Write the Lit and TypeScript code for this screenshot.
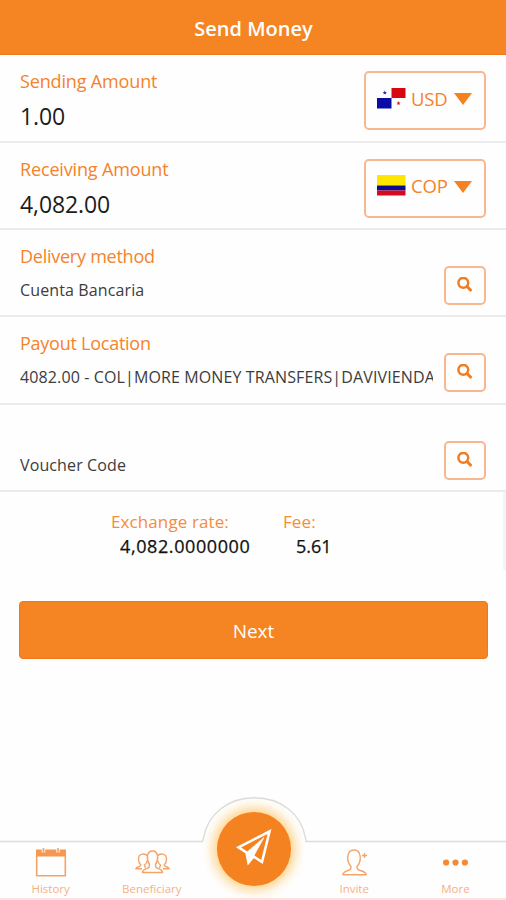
import { LitElement, html, css, svg } from "lit";
import { customElement, property } from "lit/decorators.js";

const panama = svg`<svg viewBox="0 0 29 21" width="29" height="21">
  <rect x="14.5" y="0" width="14" height="10" fill="#d80610"/>
  <rect x="0" y="10" width="14.5" height="10.5" fill="#0b0ba6"/>
  <path d="M7.8 2.6l.6 1.4 1.5.1-1.1 1 .3 1.5-1.3-.8-1.3.8.3-1.5-1.1-1 1.5-.1z" fill="#2a2ab0"/>
  <path d="M21.5 13.1l.6 1.4 1.5.1-1.1 1 .3 1.5-1.3-.8-1.3.8.3-1.5-1.1-1 1.5-.1z" fill="#d8201c"/>
</svg>`;

const colombia = svg`<svg viewBox="0 0 29 21" width="29" height="21">
  <rect width="28.5" height="10.5" fill="#ffe600"/>
  <rect y="10.5" width="28.5" height="5" fill="#0b0b96"/>
  <rect y="15.5" width="28.5" height="5" fill="#d50a1c"/>
</svg>`;

@customElement("amount-row")
class AmountRow extends LitElement {
  @property() label = "";
  @property() value = "";
  @property() currency = "";
  static styles = css`
    :host { display: flex; justify-content: space-between; box-sizing: border-box; height: 100%; padding: 0 20px; }
    .label { font-size: 18px; line-height: 24px; color: #f4832b; margin-top: 14px; letter-spacing: -0.15px; }
    .value { font-size: 23px; line-height: 30px; color: #1c1c1c; margin-top: 8px; letter-spacing: -0.1px; }
    .pick { display: flex; align-items: center; box-sizing: border-box; width: 122px; height: 59px; margin-top: 16px;
      border: 2px solid #f8b78f; border-radius: 5px; padding: 0 0 5px 11px; color: #f4832b; font-size: 18.5px; }
    .flag { display: flex; margin-right: 5px; }
    .code { width: 38px; letter-spacing: -0.2px; white-space: nowrap; }
    .caret { width: 0; height: 0; margin: 2px 0 0 4.5px; border: 9.5px solid transparent; border-top: 12px solid #f58220; border-bottom: 0; }
  `;
  render() {
    return html`<div><div class="label">${this.label}</div><div class="value">${this.value}</div></div>
      <div class="pick"><span class="flag">${this.currency === "USD" ? panama : colombia}</span>
      <span class="code">${this.currency}</span><span class="caret"></span></div>`;
  }
}

@customElement("lookup-row")
class LookupRow extends LitElement {
  @property() label = "";
  @property() value = "";
  static styles = css`
    :host { display: flex; justify-content: space-between; box-sizing: border-box; height: 100%; padding: 0 20px; }
    .text { width: 413px; overflow: hidden; white-space: nowrap; flex: none; }
    .label { font-size: 18px; line-height: 24px; height: 24px; color: #f4832b; margin-top: 14px; letter-spacing: -0.25px; }
    .value { font-size: 16px; line-height: 24px; color: #3c3c3c; margin-top: 10px; letter-spacing: 0.12px; }
    .find { display: flex; justify-content: center; box-sizing: border-box; flex: none; width: 42px; height: 39px; margin: 36px 0 0 0;
      border: 2px solid #f8b78f; border-radius: 5px; padding-top: 9px; }
  `;
  render() {
    return html`<div class="text"><div class="label">${this.label}</div><div class="value">${this.value}</div></div>
      <div class="find"><svg width="16" height="16" viewBox="0 0 16 16" fill="none" stroke="#f07d22">
        <circle cx="6.3" cy="5.800" r="4.9" stroke-width="2.5"/><path d="M10 9.500L13.500 13" stroke-width="3.100" stroke-linecap="round"/></svg></div>`;
  }
}

const icons: Record<string, unknown> = {
  History: svg`<svg width="34" height="32" viewBox="0 0 34 32" fill="none" stroke="#f5a469">
    <path d="M2.700 9V28.800H31.300V9" stroke-width="1.600"/><path d="M2 2.500H32V9.500H2z" fill="#f79850" stroke="none"/>
    <path d="M9.500 1.500V5.500M24 1.500V5.500" stroke="#fef0e4" stroke-width="3.600"/><path d="M9.500 1V5.500M24 1V5.500" stroke-width="1.600"/></svg>`,
  Beneficiary: svg`<svg width="36" height="32" viewBox="0 0 36 32" fill="none" stroke="#f5a469" stroke-width="1.400" stroke-linejoin="round">
    <path d="M15.500 17.500C12.500 13.500 12 4 18.500 4S24.500 13.500 21.500 17.500C21.500 20.500 22.500 21 25 21.800C27.500 22.600 28.500 23.500 28.500 25.500H8.500C8.500 23.500 9.500 22.600 12 21.800C14.500 21 15.500 20.500 15.500 17.500Z"/>
    <path d="M13.300 9C11.500 6 4.500 6 4.500 12C4.500 15 5.300 16.500 6.800 18C6.800 20 2 19.500 1.800 21.800H8M13.300 13.500C13 15.500 12 17 10.500 18L11.500 21M23.700 9C25.500 6 32.500 6 32.500 12C32.500 15 31.700 16.500 30.200 18C30.200 20 35 19.500 35.200 21.800H29M23.700 13.500C24 15.500 25 17 26.500 18L25.500 21"/></svg>`,
  Invite: svg`<svg width="28" height="32" viewBox="0 0 28 32" fill="none" stroke="#f5a469" stroke-width="1.400" stroke-linejoin="round">
    <path d="M11 19.500C6.500 15 6 3 14 3S21.500 15 17 19.500C17 22.500 18 23 21 23.800C24.500 24.800 26 25.500 26.200 27.800H2.800C3 25.500 4 24.800 7 23.800C10 23 11 22.500 11 19.500Z"/>
    <path d="M22 8.500H27M24.500 6V11"/></svg>`,
  More: svg`<svg width="26" height="32" viewBox="0 0 26 32" fill="#f58a33">
    <circle cx="4.100" cy="15.500" r="3.100"/><circle cx="13.500" cy="15.500" r="3.100"/><circle cx="22.900" cy="15.500" r="3.100"/></svg>`,
};

@customElement("tab-bar")
class TabBar extends LitElement {
  static styles = css`
    :host { display: block; position: relative; height: 104px; }
    .edge { position: absolute; left: 0; top: 0; }
    .send { position: absolute; left: 217px; top: 16px; width: 74px; height: 74px; border-radius: 50%; background: #f58220;
      box-shadow: 0 0 12px 4px #ffcf80; display: flex; }
    .tabs { display: grid; grid-template-columns: repeat(5, 1fr); padding-top: 51px; height: 51px; border-bottom: 2px solid #fde2dd; }
    .tab { display: flex; flex-direction: column; align-items: center; color: #f7b083; font-size: 11.500px; line-height: 16px; }
    .tab svg { display: block; }
    .name { margin-top: 2px; white-space: nowrap; }
  `;
  render() {
    const names = ["History", "Beneficiary", "", "Invite", "More"];
    return html`<div class="tabs">${names.map((n) => html`<div class="tab">${icons[n] ?? ""}<span class="name">${n}</span></div>`)}</div>
      <svg class="edge" width="506" height="60" viewBox="0 0 506 60" fill="none">
        <path d="M0 45.500H202.500L203.500 42C208 17 229 1.800 254.500 1.800S301 17 305.500 42L306 45.500H506" stroke="#dcdcdf" stroke-width="1.400"/></svg>
      <div class="send"><svg width="74" height="74" viewBox="0 0 74 74" fill="none" stroke="#fff" stroke-width="2.600" stroke-linejoin="miter">
        <path d="M52.500 19.500L21.500 35.300L29.500 40.500L31.500 50.500L36.500 44.500L45 50Z"/>
        <path d="M29.500 40.500L47 25.500L36.500 44.500L31.500 51Z" fill="#fff" stroke-width=".6"/></svg></div>`;
  }
}

@customElement("app-root")
class AppRoot extends LitElement {
  static styles = css`
    :host { display: flex; flex-direction: column; height: 900px; width: 506px; overflow: hidden; background: #fefefe;
      font-family: "Open Sans", "Noto Sans", sans-serif; }
    .top { height: 55px; box-sizing: border-box; background: #f58423; border-bottom: 1px solid #f07818; color: #fff; font-weight: 600; font-size: 20px;
      line-height: 57px; text-align: center; padding-left: 1px; flex: none; }
    .rows { display: grid; grid-template-rows: 87.500px 87.200px 87.300px 88px 87px; flex: none; }
    .row { border-bottom: 2px solid #ebebeb; box-sizing: border-box; min-width: 0; }
    .rates { display: flex; height: 78px; box-sizing: border-box; flex: none; padding: 19px 0 0 111px; border-right: 3px solid #f5f5f5; }
    .rate { width: 172px; white-space: nowrap; }
    .rates .k { color: #f58c3a; font-size: 17px; line-height: 22px; letter-spacing: 0.1px; }
    .rates .v { color: #111; font-size: 18px; line-height: 26px; font-weight: 500; -webkit-text-stroke: 0.25px #111; }
    .rate .v { padding-left: 9px; letter-spacing: 0.600px; }
    .fee .v { padding-left: 13px; }
    .next { margin: 31px 18px 0 19px; height: 58px; flex: none; box-sizing: border-box; border: 1px solid #f07818; border-radius: 4px; background: #f58423;
      color: #fff; font-size: 19px; line-height: 59px; text-align: center; }
    .fill { flex: 1; }
  `;
  render() {
    return html`<div class="top">Send Money</div>
      <div class="rows">
        <div class="row"><amount-row label="Sending Amount" value="1.00" currency="USD"></amount-row></div>
        <div class="row"><amount-row label="Receiving Amount" value="4,082.00" currency="COP"></amount-row></div>
        <div class="row"><lookup-row label="Delivery method" value="Cuenta Bancaria"></lookup-row></div>
        <div class="row"><lookup-row label="Payout Location" value="4082.00 - COL|MORE MONEY TRANSFERS|DAVIVIENDA"></lookup-row></div>
        <div class="row"><lookup-row value="Voucher Code"></lookup-row></div>
      </div>
      <div class="rates">
        <div class="rate"><div class="k">Exchange rate:</div><div class="v">4,082.0000000</div></div>
        <div class="fee"><div class="k">Fee:</div><div class="v">5.61</div></div>
      </div>
      <div class="next">Next</div>
      <div class="fill"></div>
      <tab-bar></tab-bar>`;
  }
}
